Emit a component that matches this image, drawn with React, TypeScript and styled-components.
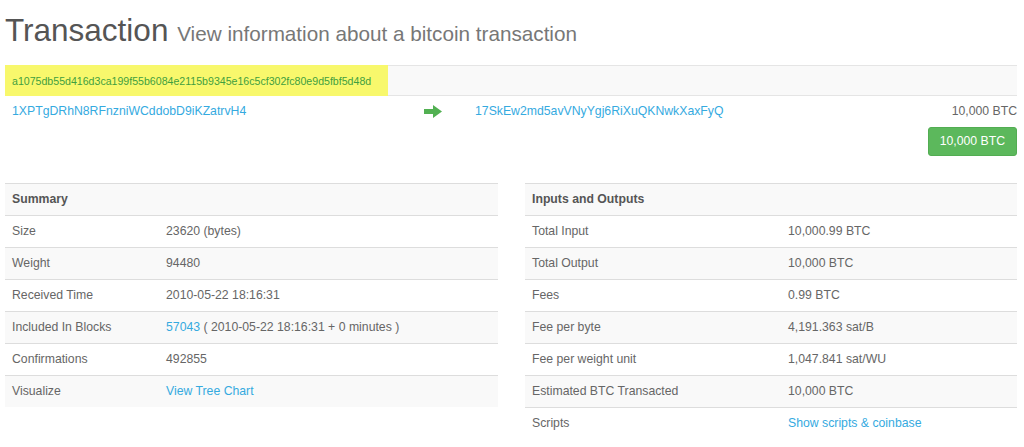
import React from "react";
import styled, { createGlobalStyle } from "styled-components";

const Global = createGlobalStyle`
  html, body { margin: 0; padding: 0; background: #fff; }
  body {
    font-family: "Liberation Sans", Arial, sans-serif;
    font-size: 12.25px;
    color: #666;
  }
  * { box-sizing: border-box; }
`;

const Page = styled.div`
  width: 1017px;
  padding: 0 0 0 5px;
`;

const Title = styled.h1`
  margin: 13px 0 0;
  height: 52px;
  font-size: 31.5px;
  line-height: 34.6px;
  font-weight: normal;
  color: #555;
  white-space: nowrap;
`;

const Sub = styled.small`
  font-size: 20.7px;
  color: #777;
`;

const HashBar = styled.div`
  height: 31px;
  background: #f9f9f9;
  border-top: 1px solid #e5e5e5;
  border-bottom: 1px solid #e5e5e5;
  display: flex;
  align-items: stretch;
`;

const Highlight = styled.span`
  display: flex;
  align-items: center;
  margin: -1px 0;
  padding: 0 7px;
  width: 383px;
  background: #f8f86c;
  font-size: 10.6px;
  color: #3f9f3f;
  white-space: nowrap;
`;

const TxRow = styled.div`
  display: grid;
  grid-template-columns: 412px 51px 1fr auto;
  align-items: center;
  padding: 6px 0 0 7px;
  line-height: 18px;
`;

const Link = styled.a`
  color: #35aadf;
  text-decoration: none;
  white-space: nowrap;
`;

const Amount = styled.span`
  color: #666;
  text-align: right;
  white-space: nowrap;
`;

const Arrow = styled.svg`
  display: block;
  width: 18px;
  height: 13px;
`;

const ButtonRow = styled.div`
  display: flex;
  justify-content: flex-end;
  margin-top: 7px;
`;

const SuccessButton = styled.button`
  font-family: inherit;
  font-size: 12.25px;
  line-height: 17px;
  padding: 5px 11px;
  border: 1px solid #52ad52;
  border-radius: 3px;
  background: #5cb85c;
  color: #fff;
  cursor: pointer;
`;

const Tables = styled.div`
  display: grid;
  grid-template-columns: 493px 492px;
  column-gap: 27px;
  margin-top: 27px;
  align-items: start;
`;

const Table = styled.div<{ $keyWidth: number }>`
  display: grid;
  grid-template-columns: ${(p) => p.$keyWidth}px 1fr;
`;

const Row = styled.div<{ $striped: boolean }>`
  display: contents;
  & > div {
    background: ${(p) => (p.$striped ? "#f9f9f9" : "#fff")};
  }
`;

const Cell = styled.div`
  height: 32px;
  line-height: 31px;
  padding: 0 7px;
  border-top: 1px solid #ddd;
  white-space: nowrap;
  color: #666;
`;

const HeadCell = styled(Cell)`
  font-weight: bold;
  color: #555;
`;

type Item = { k: string; v: React.ReactNode };

const summary: Item[] = [
  { k: "Size", v: "23620 (bytes)" },
  { k: "Weight", v: "94480" },
  { k: "Received Time", v: "2010-05-22 18:16:31" },
  {
    k: "Included In Blocks",
    v: (
      <>
        <Link href="#">57043</Link> ( 2010-05-22 18:16:31 + 0 minutes )
      </>
    ),
  },
  { k: "Confirmations", v: "492855" },
  { k: "Visualize", v: <Link href="#">View Tree Chart</Link> },
];

const io: Item[] = [
  { k: "Total Input", v: "10,000.99 BTC" },
  { k: "Total Output", v: "10,000 BTC" },
  { k: "Fees", v: "0.99 BTC" },
  { k: "Fee per byte", v: "4,191.363 sat/B" },
  { k: "Fee per weight unit", v: "1,047.841 sat/WU" },
  { k: "Estimated BTC Transacted", v: "10,000 BTC" },
  { k: "Scripts", v: <Link href="#">Show scripts &amp; coinbase</Link> },
];

function InfoTable({ title, items, keyWidth }: { title: string; items: Item[]; keyWidth: number }) {
  return (
    <Table $keyWidth={keyWidth}>
      <Row $striped>
        <HeadCell>{title}</HeadCell>
        <HeadCell />
      </Row>
      {items.map((it, i) => (
        <Row key={it.k} $striped={i % 2 === 1}>
          <Cell>{it.k}</Cell>
          <Cell>{it.v}</Cell>
        </Row>
      ))}
    </Table>
  );
}

export default function App() {
  return (
    <>
      <Global />
      <Page>
        <Title>
          Transaction <Sub>View information about a bitcoin transaction</Sub>
        </Title>
        <HashBar>
          <Highlight>a1075db55d416d3ca199f55b6084e2115b9345e16c5cf302fc80e9d5fbf5d48d</Highlight>
        </HashBar>
        <TxRow>
          <Link href="#">1XPTgDRhN8RFnzniWCddobD9iKZatrvH4</Link>
          <Arrow viewBox="0 0 18 13">
            <path d="M0 4 H9 V0 L18 6.5 L9 13 V9 H0 Z" fill="#52b052" />
          </Arrow>
          <Link href="#">17SkEw2md5avVNyYgj6RiXuQKNwkXaxFyQ</Link>
          <Amount>10,000 BTC</Amount>
        </TxRow>
        <ButtonRow>
          <SuccessButton>10,000 BTC</SuccessButton>
        </ButtonRow>
        <Tables>
          <InfoTable title="Summary" items={summary} keyWidth={154} />
          <InfoTable title="Inputs and Outputs" items={io} keyWidth={256} />
        </Tables>
      </Page>
    </>
  );
}
